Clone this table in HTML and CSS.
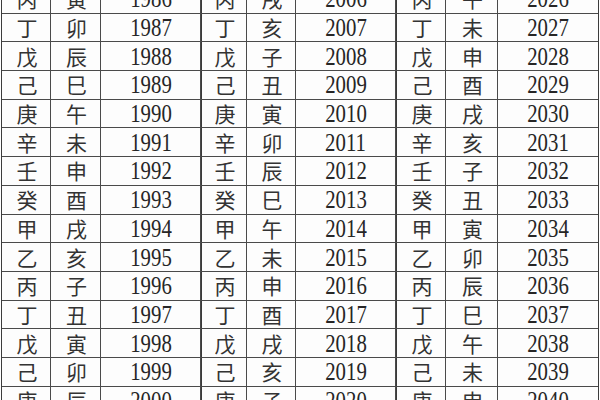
FILE: index.html
```html
<!DOCTYPE html>
<html lang="zh">
<head>
<meta charset="utf-8">
<link rel="stylesheet" href="styles.css">
</head>
<body>
<div class="sheet">
<div class="grid">
<div class="c">丙</div><div class="c">寅</div><div class="n"><span>1986</span></div><div class="c g">丙</div><div class="c">戌</div><div class="n"><span>2006</span></div><div class="c g">丙</div><div class="c">午</div><div class="n"><span>2026</span></div>
<div class="c">丁</div><div class="c">卯</div><div class="n"><span>1987</span></div><div class="c g">丁</div><div class="c">亥</div><div class="n"><span>2007</span></div><div class="c g">丁</div><div class="c">未</div><div class="n"><span>2027</span></div>
<div class="c">戊</div><div class="c">辰</div><div class="n"><span>1988</span></div><div class="c g">戊</div><div class="c">子</div><div class="n"><span>2008</span></div><div class="c g">戊</div><div class="c">申</div><div class="n"><span>2028</span></div>
<div class="c">己</div><div class="c">巳</div><div class="n"><span>1989</span></div><div class="c g">己</div><div class="c">丑</div><div class="n"><span>2009</span></div><div class="c g">己</div><div class="c">酉</div><div class="n"><span>2029</span></div>
<div class="c">庚</div><div class="c">午</div><div class="n"><span>1990</span></div><div class="c g">庚</div><div class="c">寅</div><div class="n"><span>2010</span></div><div class="c g">庚</div><div class="c">戌</div><div class="n"><span>2030</span></div>
<div class="c">辛</div><div class="c">未</div><div class="n"><span>1991</span></div><div class="c g">辛</div><div class="c">卯</div><div class="n"><span>2011</span></div><div class="c g">辛</div><div class="c">亥</div><div class="n"><span>2031</span></div>
<div class="c">壬</div><div class="c">申</div><div class="n"><span>1992</span></div><div class="c g">壬</div><div class="c">辰</div><div class="n"><span>2012</span></div><div class="c g">壬</div><div class="c">子</div><div class="n"><span>2032</span></div>
<div class="c">癸</div><div class="c">酉</div><div class="n"><span>1993</span></div><div class="c g">癸</div><div class="c">巳</div><div class="n"><span>2013</span></div><div class="c g">癸</div><div class="c">丑</div><div class="n"><span>2033</span></div>
<div class="c">甲</div><div class="c">戌</div><div class="n"><span>1994</span></div><div class="c g">甲</div><div class="c">午</div><div class="n"><span>2014</span></div><div class="c g">甲</div><div class="c">寅</div><div class="n"><span>2034</span></div>
<div class="c">乙</div><div class="c">亥</div><div class="n"><span>1995</span></div><div class="c g">乙</div><div class="c">未</div><div class="n"><span>2015</span></div><div class="c g">乙</div><div class="c">卯</div><div class="n"><span>2035</span></div>
<div class="c">丙</div><div class="c">子</div><div class="n"><span>1996</span></div><div class="c g">丙</div><div class="c">申</div><div class="n"><span>2016</span></div><div class="c g">丙</div><div class="c">辰</div><div class="n"><span>2036</span></div>
<div class="c">丁</div><div class="c">丑</div><div class="n"><span>1997</span></div><div class="c g">丁</div><div class="c">酉</div><div class="n"><span>2017</span></div><div class="c g">丁</div><div class="c">巳</div><div class="n"><span>2037</span></div>
<div class="c">戊</div><div class="c">寅</div><div class="n"><span>1998</span></div><div class="c g">戊</div><div class="c">戌</div><div class="n"><span>2018</span></div><div class="c g">戊</div><div class="c">午</div><div class="n"><span>2038</span></div>
<div class="c">己</div><div class="c">卯</div><div class="n"><span>1999</span></div><div class="c g">己</div><div class="c">亥</div><div class="n"><span>2019</span></div><div class="c g">己</div><div class="c">未</div><div class="n"><span>2039</span></div>
<div class="c">庚</div><div class="c">辰</div><div class="n"><span>2000</span></div><div class="c g">庚</div><div class="c">子</div><div class="n"><span>2020</span></div><div class="c g">庚</div><div class="c">申</div><div class="n"><span>2040</span></div>
</div>
</div>
</body>
</html>
```
FILE: styles.css
```css
html, body {
  margin: 0;
  padding: 0;
  background: #ffffff;
}
.sheet {
  width: 600px;
  height: 400px;
  overflow: hidden;
}
.grid {
  margin-top: -16px;
  margin-left: 1px;
  width: 596px;
  display: grid;
  grid-template-columns: 48px 49px 99px 45px 48px 99px 49px 51px 100px;
  grid-auto-rows: 27.7px;
  gap: 1px;
  border: 1px solid #3c3c3c;
  background: #4a4a4a;
}
.c, .n {
  background: #fdfdfd;
  display: flex;
  align-items: center;
  justify-content: center;
  color: #262626;
}
.c {
  font-family: "Noto Sans CJK SC", sans-serif;
  font-size: 21px;
  font-weight: 400;
  color: #333333;
  line-height: 1;
  padding-left: 2px;
}
.g {
  border-left: 1px solid #3a3a3a;
}
.n span {
  display: inline-block;
  font-family: "Liberation Serif", serif;
  font-size: 26px;
  line-height: 1;
  transform: scaleX(0.8);
  padding-top: 1px;
}
```
